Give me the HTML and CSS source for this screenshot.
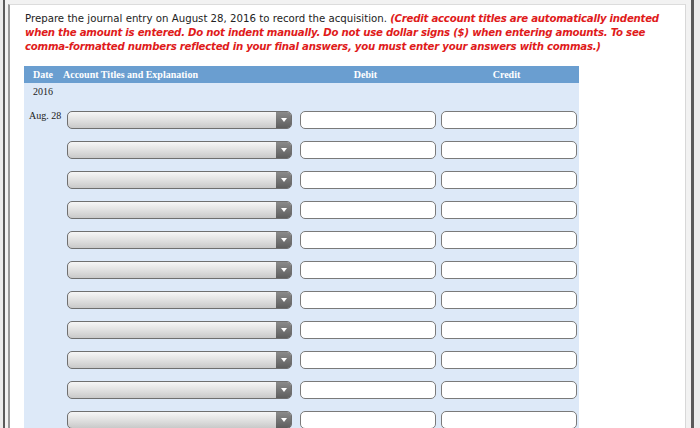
FILE: index.html
```html
<!DOCTYPE html>
<html lang="en">
<head>
    <meta charset="UTF-8">
    <title>Journal entry</title>
    <link rel="stylesheet" href="styles.css">
</head>
<body>
    <div class="frame">
        <div class="panel">
            <p class="question">
                Prepare the journal entry on August 28, 2016 to record the acquisition.
                <span class="note">(Credit account titles are automatically indented<br>
                when the amount is entered. Do not indent manually. Do not use dollar signs ($) when entering amounts. To see<br>
                comma-formatted numbers reflected in your final answers, you must enter your answers with commas.)</span>
            </p>

            <div class="journal">
                <div class="head">
                    <span class="c-date">Date</span>
                    <span class="c-acct">Account Titles and Explanation</span>
                    <span class="c-num">Debit</span>
                    <span class="c-num">Credit</span>
                </div>
                <div class="year">2016</div>
                <div class="rows">
                    <div class="row">
                        <span class="c-date">Aug. 28</span>
                        <div class="select"><span class="arrow"></span></div>
                        <input class="amount" type="text">
                        <input class="amount" type="text">
                    </div>
                    <div class="row">
                        <span class="c-date"></span>
                        <div class="select"><span class="arrow"></span></div>
                        <input class="amount" type="text">
                        <input class="amount" type="text">
                    </div>
                    <div class="row">
                        <span class="c-date"></span>
                        <div class="select"><span class="arrow"></span></div>
                        <input class="amount" type="text">
                        <input class="amount" type="text">
                    </div>
                    <div class="row">
                        <span class="c-date"></span>
                        <div class="select"><span class="arrow"></span></div>
                        <input class="amount" type="text">
                        <input class="amount" type="text">
                    </div>
                    <div class="row">
                        <span class="c-date"></span>
                        <div class="select"><span class="arrow"></span></div>
                        <input class="amount" type="text">
                        <input class="amount" type="text">
                    </div>
                    <div class="row">
                        <span class="c-date"></span>
                        <div class="select"><span class="arrow"></span></div>
                        <input class="amount" type="text">
                        <input class="amount" type="text">
                    </div>
                    <div class="row">
                        <span class="c-date"></span>
                        <div class="select"><span class="arrow"></span></div>
                        <input class="amount" type="text">
                        <input class="amount" type="text">
                    </div>
                    <div class="row">
                        <span class="c-date"></span>
                        <div class="select"><span class="arrow"></span></div>
                        <input class="amount" type="text">
                        <input class="amount" type="text">
                    </div>
                    <div class="row">
                        <span class="c-date"></span>
                        <div class="select"><span class="arrow"></span></div>
                        <input class="amount" type="text">
                        <input class="amount" type="text">
                    </div>
                    <div class="row">
                        <span class="c-date"></span>
                        <div class="select"><span class="arrow"></span></div>
                        <input class="amount" type="text">
                        <input class="amount" type="text">
                    </div>
                    <div class="row">
                        <span class="c-date"></span>
                        <div class="select"><span class="arrow"></span></div>
                        <input class="amount" type="text">
                        <input class="amount" type="text">
                    </div>
                </div>
            </div>
        </div>
    </div>
</body>
</html>
```

FILE: styles.css
```css
body {
    margin: 0;
    padding: 0;
    background-color: #ececec;
    font-family: "DejaVu Sans", Verdana, sans-serif;
    overflow: hidden;
}
.frame {
    margin-left: 3px;
    width: 691px;
    height: 428px;
    border-left: 2px solid #5a5a5a;
    border-right: 3px solid #5a5a5a;
    padding: 4px 0 0 3px;
    box-sizing: border-box;
    background-color: #f2f2f2;
    overflow: hidden;
}
.panel {
    height: 100%;
    margin-right: 5px;
    border-left: 2px solid #9a9a9a;
    border-right: 1px solid #d8d8d8;
    border-top: 1px solid #dcdcdc;
    background: #ffffff;
    padding: 0 0 0 14px;
    box-sizing: border-box;
    overflow: hidden;
}
.question {
    margin: 0;
    padding: 7px 0 0 1px;
    width: 660px;
    white-space: nowrap;
    font-size: 10.2px;
    line-height: 13.8px;
    color: #222;
}
.note {
    color: #e01b1b;
    font-weight: bold;
    font-style: italic;
    letter-spacing: -0.25px;
}
.journal {
    margin-top: 13px;
    width: 555px;
    height: 400px;
    background-color: #dde9f8;
    font-family: "Liberation Serif", "Times New Roman", serif;
    font-size: 10px;
}
.head {
    display: flex;
    align-items: center;
    height: 17px;
    background-color: #6a9ed0;
    color: #fff;
    font-weight: bold;
}
.head .c-date {
    width: 39px;
    padding-left: 9px;
    box-sizing: border-box;
}
.head .c-acct {
    width: 232px;
}
.head .c-num {
    width: 141px;
    text-align: center;
}
.year {
    padding: 3px 0 0 9px;
    height: 17px;
    color: #222;
}
.rows {
    display: flex;
    flex-direction: column;
    gap: 12px;
    padding-top: 8px;
}
.row {
    display: flex;
    align-items: center;
    height: 18px;
}
.row > * {
    flex-shrink: 0;
}
.row .c-date {
    width: 43px;
    padding-left: 5px;
    box-sizing: border-box;
    color: #222;
    white-space: nowrap;
    margin-top: -9px;
}
.select {
    position: relative;
    width: 225px;
    height: 18px;
    box-sizing: border-box;
    border: 1px solid #6f6f6f;
    border-radius: 5px;
    background: linear-gradient(#f6f6f6, #dcdcdc 60%, #c9c9c9);
    margin-right: 8px;
}
.arrow {
    position: absolute;
    right: 0;
    top: 0;
    width: 15px;
    height: 16px;
    border-radius: 0 4px 4px 0;
    background: linear-gradient(#8a8a8a, #5e5e5e);
}
.arrow::after {
    content: "";
    position: absolute;
    left: 5px;
    top: 6px;
    border-left: 3px solid transparent;
    border-right: 3px solid transparent;
    border-top: 4px solid #fff;
}
.amount {
    width: 136px;
    height: 18px;
    box-sizing: border-box;
    margin: 0 5px 0 0;
    padding: 0;
    border: 1px solid #7a7a7a;
    border-radius: 5px;
    background: #fff;
}
```
